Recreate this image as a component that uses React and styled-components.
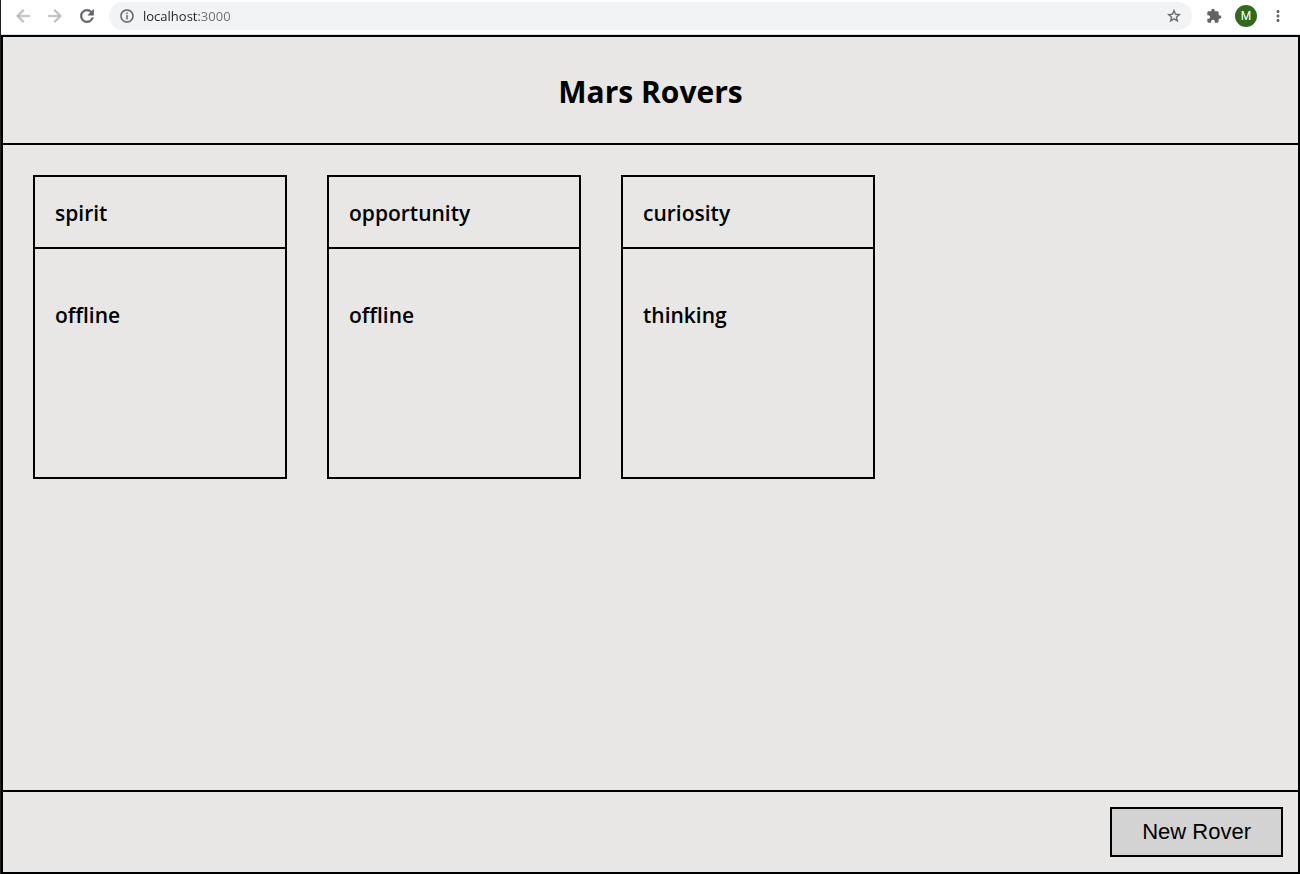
import React from "react";
import styled, { createGlobalStyle } from "styled-components";

const GlobalStyle = createGlobalStyle`
  *, *::before, *::after { box-sizing: border-box; }
  body {
    margin: 0;
    background: #e8e7e5;
    color: #000;
    font-family: "Segoe UI", "Open Sans", "Noto Sans", sans-serif;
  }
`;

const Window = styled.div`
  display: flex;
  flex-direction: column;
  min-height: 100vh;
  border-left: 1px solid #222;
`;

const Toolbar = styled.nav`
  display: flex;
  align-items: center;
  height: 35px;
  padding: 0 6px 2px;
  background: #fff;
  border-bottom: 1px solid #dadce0;
`;

const IconButton = styled.button`
  display: flex;
  align-items: center;
  justify-content: center;
  flex: none;
  width: 32px;
  height: 28px;
  padding: 0;
  border: 0;
  background: none;
  color: ${(p) => (p.disabled ? "#babcbe" : "#5f6368")};
`;

const AddressBar = styled.div`
  display: flex;
  align-items: center;
  flex: 1;
  height: 28px;
  margin: 0 6px;
  padding: 0 2px;
  border-radius: 14px;
  background: #f1f3f4;
`;

const Address = styled.input`
  flex: 1;
  min-width: 0;
  padding: 0;
  border: 0;
  outline: 0;
  font: 13px/20px "Segoe UI", "Open Sans", sans-serif;
  color: transparent;
  background: linear-gradient(90deg, #202124 56px, #6b6f73 56px);
  background-clip: text;
`;

const Avatar = styled.span`
  display: flex;
  align-items: center;
  justify-content: center;
  width: 22px;
  height: 22px;
  border-radius: 50%;
  background: #33691e;
  color: #fff;
  font: 12px/22px Roboto, sans-serif;
`;

const Page = styled.div`
  display: flex;
  flex: 1;
  flex-direction: column;
  border: 2px solid #000;
`;

const Header = styled.header`
  padding: 34px 20px 30px;
  border-bottom: 2px solid #000;
`;

const Title = styled.h1`
  margin: 0;
  font-size: 30px;
  line-height: 42px;
  font-weight: 700;
  text-align: center;
`;

const Rovers = styled.main`
  display: flex;
  flex: 1;
  flex-wrap: wrap;
  align-items: flex-start;
  gap: 40px;
  padding: 30px;
`;

const Card = styled.article`
  width: 254px;
  min-height: 304px;
  border: 2px solid #000;
`;

const CardName = styled.h2`
  margin: 0;
  padding: 22px 20px 20px;
  border-bottom: 2px solid #000;
  font-size: 21px;
  line-height: 28px;
  font-weight: 600;
`;

const CardStatus = styled.p`
  margin: 0;
  padding: 52px 20px 20px;
  font-size: 21px;
  line-height: 28px;
  font-weight: 600;
`;

const Footer = styled.footer`
  display: flex;
  justify-content: flex-end;
  padding: 15px;
  border-top: 2px solid #000;
`;

const NewRover = styled.button`
  height: 50px;
  padding: 0 30px;
  border: 2px solid #000;
  background: #d3d3d3;
  color: #000;
  font: 22px/26px Arial, "Liberation Sans", sans-serif;
`;

const rovers = [
  { name: "spirit", status: "offline" },
  { name: "opportunity", status: "offline" },
  { name: "curiosity", status: "thinking" },
];

const paths = {
  back: "M20 11H7.83l5.59-5.59L12 4l-8 8 8 8 1.41-1.41L7.83 13H20v-2z",
  forward: "M12 4l-1.41 1.41L16.17 11H4v2h12.17l-5.58 5.59L12 20l8-8z",
  reload:
    "M17.65 6.35C16.2 4.9 14.21 4 12 4c-4.42 0-7.99 3.58-7.99 8s3.57 8 7.99 8c3.73 0 6.84-2.55 7.73-6h-2.08c-.82 2.33-3.04 4-5.65 4-3.31 0-6-2.69-6-6s2.69-6 6-6c1.66 0 3.14.69 4.22 1.78L13 11h7V4l-2.35 2.35z",
  info: "M11 7h2v2h-2zm0 4h2v6h-2zm1-9C6.48 2 2 6.48 2 12s4.480 10 10 10 10-4.480 10-10S17.520 2 12 2zm0 18c-4.410 0-8-3.590-8-8s3.590-8 8-8 8 3.590 8 8-3.590 8-8 8z",
  star: "M22 9.24l-7.19-.62L12 2 9.19 8.63 2 9.24l5.46 4.73L5.82 21 12 17.27 18.18 21l-1.63-7.03L22 9.24zM12 15.4l-3.76 2.27 1-4.28-3.32-2.88 4.38-.38L12 6.1l1.71 4.04 4.38.38-3.32 2.88 1 4.28L12 15.4z",
  puzzle:
    "M20.5 11H19V7c0-1.1-.9-2-2-2h-4V3.500a2.500 2.500 0 0 0-5 0V5H4c-1.100 0-1.990.9-1.990 2v3.800H3.500c1.490 0 2.700 1.210 2.700 2.700s-1.210 2.700-2.700 2.700H2V20c0 1.100.9 2 2 2h3.800v-1.500c0-1.490 1.210-2.700 2.700-2.700 1.490 0 2.700 1.210 2.700 2.700V22H17c1.100 0 2-.9 2-2v-4h1.500a2.500 2.500 0 0 0 0-5z",
  more: "M12 8c1.100 0 2-.9 2-2s-.9-2-2-2-2 .9-2 2 .9 2 2 2zm0 2c-1.100 0-2 .9-2 2s.9 2 2 2 2-.9 2-2-.9-2-2-2zm0 6c-1.100 0-2 .9-2 2s.9 2 2 2 2-.9 2-2-.9-2-2-2z",
};

function Icon({ name, size = 18, weight = 0 }) {
  return (
    <svg
      width={size}
      height={size}
      viewBox="0 0 24 24"
      fill="currentColor"
      stroke="currentColor"
      strokeWidth={weight}
      aria-hidden="true"
    >
      <path d={paths[name]} />
    </svg>
  );
}

export default function App() {
  return (
    <>
      <GlobalStyle />
      <Window>
        <Toolbar aria-label="Browser">
          <IconButton disabled aria-label="Back"><Icon name="back" size={20} weight={0.6} /></IconButton>
          <IconButton disabled aria-label="Forward"><Icon name="forward" size={20} weight={0.6} /></IconButton>
          <IconButton aria-label="Reload"><Icon name="reload" size={20} weight={0.6} /></IconButton>
          <AddressBar>
            <IconButton aria-label="Site information"><Icon name="info" size={16} weight={0.3} /></IconButton>
            <Address aria-label="Address" defaultValue="localhost:3000" spellCheck={false} />
            <IconButton aria-label="Bookmark this page"><Icon name="star" size={16} weight={0.4} /></IconButton>
          </AddressBar>
          <IconButton aria-label="Extensions"><Icon name="puzzle" size={16} /></IconButton>
          <IconButton aria-label="Profile"><Avatar>M</Avatar></IconButton>
          <IconButton aria-label="Menu"><Icon name="more" /></IconButton>
        </Toolbar>
        <Page>
          <Header>
            <Title>Mars Rovers</Title>
          </Header>
          <Rovers>
            {rovers.map((rover) => (
              <Card key={rover.name}>
                <CardName>{rover.name}</CardName>
                <CardStatus>{rover.status}</CardStatus>
              </Card>
            ))}
          </Rovers>
          <Footer>
            <NewRover>New Rover</NewRover>
          </Footer>
        </Page>
      </Window>
    </>
  );
}
